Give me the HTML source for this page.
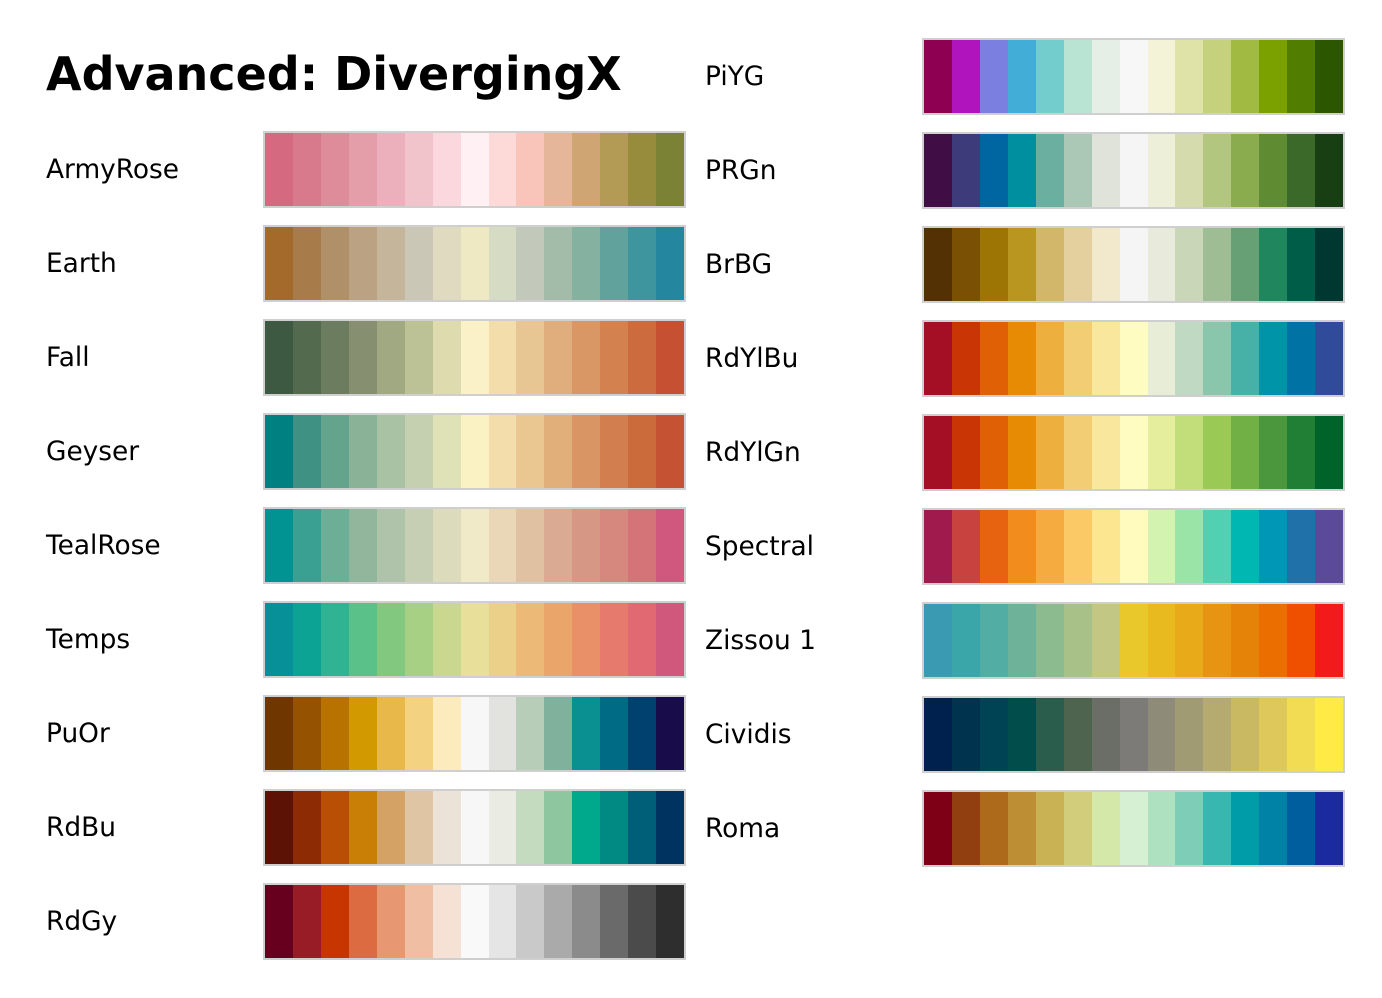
<!DOCTYPE html>
<html><head><meta charset="utf-8"><style>
body{margin:0;width:1382px;height:998px;background:#fff;position:relative;font-family:"DejaVu Sans","Liberation Sans",sans-serif;overflow:hidden}
.t{position:absolute;left:46px;top:45px;font-size:46px;font-weight:bold;line-height:58px}
.l{position:absolute;font-size:26.4px;line-height:30px}
.b{position:absolute;width:419px;height:73px;border:2px solid #cfcfcf;display:flex}
.b i{flex:1;display:block}
</style></head><body>
<div class="t">Advanced: DivergingX</div>
<div id="c"></div>
<script>
var L=[["ArmyRose","#d4697f,#d87a8b,#de8b9a,#e49eaa,#ebb0bc,#f1c4cc,#fbd8de,#fff0f3,#fdd9d8,#f9c4b9,#e6b69a,#cea573,#b39a55,#968c3b,#7b8135"],
["Earth","#a36a2c,#a87b4a,#b09068,#baa283,#c4b59b,#cbc7b6,#e0dac0,#eee9c3,#d5dcc3,#c2c9bb,#a3bcaa,#85b1a0,#61a29c,#3e959e,#25879f"],
["Fall","#3d5941,#536a4f,#6b7d5e,#869070,#a1a982,#bcc295,#dedcaf,#faf1c8,#f2ddab,#e8c694,#e0ad7c,#d89765,#d2814f,#cb6b3e,#c55032"],
["Geyser","#008080,#3e9183,#64a38c,#8ab297,#a9c2a4,#c5d0b0,#dfe1b6,#fbf2c4,#f3deab,#eac691,#e1af7a,#d99564,#d27e4e,#cb6a3b,#c55232"],
["TealRose","#009392,#3aa092,#6caf96,#92b69b,#afc3ab,#c6cfb3,#dcdcbc,#f1eac8,#e9d7b7,#e0c1a2,#dbaa92,#d69885,#d6877e,#d47478,#d0587e"],
["Temps","#089099,#0ca294,#2fb392,#5ac188,#83c87f,#a8d085,#cad88f,#e8e09a,#ebd08a,#ecba76,#eaa56b,#e99068,#e67a6c,#e06972,#d1587d"],
["PuOr","#703600,#955200,#b87200,#d39900,#e8b84a,#f3d282,#fcebbc,#f7f7f7,#e2e3df,#b8cdb8,#7fb19c,#0a9090,#006b85,#00416f,#180c4b"],
["RdBu","#5c1204,#8c2b04,#b84f05,#c97e05,#d4a264,#dfc5a3,#ebe3d8,#f7f7f7,#eaece3,#c5dbc0,#8ec6a0,#00a98b,#008a84,#005f78,#003360"],
["RdGy","#67001f,#981c25,#c83600,#dc6b42,#e79872,#f0bfa3,#f6e1d5,#f9f9f9,#e5e5e5,#c9c9c9,#aaaaaa,#8b8b8b,#6a6a6a,#4b4b4b,#2e2e2e"]];
var R=[["PiYG","#8e0152,#b015bd,#7b80e0,#42aed8,#74cdcd,#b9e3d2,#e6efe5,#f7f7f7,#f4f2d7,#e0e3a8,#c5d17d,#a1ba41,#7ba100,#517e00,#2c5700"],
["PRGn","#400d44,#3e3b7a,#0066a2,#008f9f,#6aafa0,#aac8b5,#dfe3da,#f5f5f5,#edefd9,#d5dbac,#b3c67f,#8aac4f,#5f8b33,#3a6929,#173f13"],
["BrBG","#543005,#7a5104,#9d7504,#b8961f,#d2b66a,#e3d09e,#f2e9cd,#f5f5f5,#e8eadc,#c9d6b7,#9ebd95,#68a076,#1f865e,#005e48,#003730"],
["RdYlBu","#a50f26,#c93505,#e06005,#e88b04,#edaf3e,#f3cd73,#f8e79d,#fffcc2,#e7edd7,#c0d9c3,#8ac6ab,#47b0a7,#0094a8,#0072a3,#304b99"],
["RdYlGn","#a50f26,#c93505,#e06005,#e88b04,#edaf3e,#f3cd73,#f8e79d,#fffcc2,#e4ee9c,#c2de7a,#9ac956,#71b045,#4a973d,#207e35,#006329"],
["Spectral","#a01a4e,#c84340,#e86310,#f28c1c,#f5ab40,#fbc966,#fde690,#fffbbe,#d3f3b0,#9be4a8,#52d0b2,#00b7b1,#0097b7,#2070aa,#5b4a9a"],
["Zissou 1","#3a9ab2,#3aa6a9,#52aea5,#6fb29a,#8dbb90,#a8c189,#c3c784,#e8c82a,#e9ba20,#e8aa18,#e69412,#e58208,#ea6e00,#ef5000,#f21a1a"],
["Cividis","#00204d,#00334e,#004354,#004d4b,#2a5d4b,#4e644f,#6b6e67,#7c7b78,#8e8b79,#a19b74,#b5aa6f,#c9b962,#dec85c,#f1dc54,#ffea46"],
["Roma","#7e0016,#913e10,#ad6a1b,#bd8e33,#c8b254,#d2cd7b,#d3e8a9,#d6f0d3,#aee1c0,#7ecdb6,#38b7b1,#009ca8,#0082a7,#005e9f,#1b2b9f"]];
var h="";
function add(arr,lx,bx,top0){arr.forEach(function(r,k){var y=top0+94*k;
h+='<div class="l" style="left:'+lx+'px;top:'+(y+24)+'px">'+r[0]+'</div><div class="b" style="left:'+bx+'px;top:'+y+'px">';
r[1].split(",").forEach(function(c){h+='<i style="background:'+c+'"></i>'});h+='</div>';});}
add(L,46,263,131);add(R,705,922,38);
document.getElementById("c").innerHTML=h;
</script>
</body></html>
